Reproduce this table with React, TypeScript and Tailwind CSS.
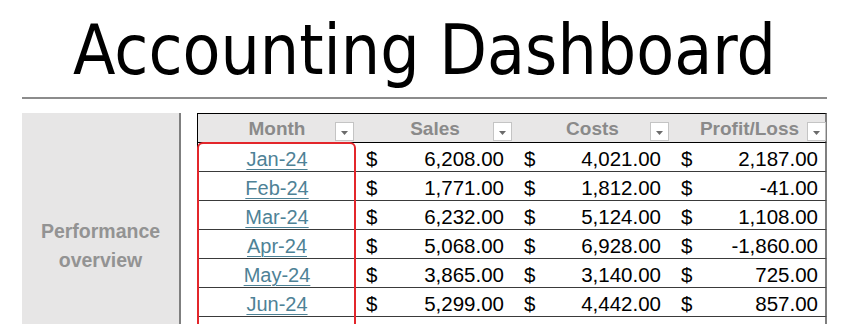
import React from "react";

type Row = { m: string; s: string; c: string; p: string };

const rows: Row[] = [
  { m: "Jan-24", s: "6,208.00", c: "4,021.00", p: "2,187.00" },
  { m: "Feb-24", s: "1,771.00", c: "1,812.00", p: "-41.00" },
  { m: "Mar-24", s: "6,232.00", c: "5,124.00", p: "1,108.00" },
  { m: "Apr-24", s: "5,068.00", c: "6,928.00", p: "-1,860.00" },
  { m: "May-24", s: "3,865.00", c: "3,140.00", p: "725.00" },
  { m: "Jun-24", s: "5,299.00", c: "4,442.00", p: "857.00" },
  { m: "Jul-24", s: "4,876.00", c: "3,912.00", p: "964.00" },
  { m: "Aug-24", s: "5,540.00", c: "4,105.00", p: "1,435.00" },
];

function FilterButton() {
  return (
    <div className="absolute right-[2px] bottom-[1px] flex h-[19px] w-[19px] items-center justify-center border border-[#c4c4c4] bg-white">
      <svg width="7" height="4" viewBox="0 0 7 4" className="mt-[3px]">
        <path d="M0 0 L7 0 L3.5 4 Z" fill="#6b6b6b" />
      </svg>
    </div>
  );
}

function HeaderCell({ label }: { label: string }) {
  return (
    <div className="relative flex h-full justify-center pt-[4px] text-[19px] leading-[21px] font-bold text-[#8a8a8a]">
      <span>{label}</span>
      <FilterButton />
    </div>
  );
}

function MoneyCell({ v }: { v: string }) {
  return (
    <div className="flex justify-between px-[10px] pt-[5px] leading-[22px]">
      <span>$</span>
      <span>{v}</span>
    </div>
  );
}

export default function App() {
  return (
    <div className="h-[324px] w-[841px] overflow-hidden bg-white pl-[22px] pr-[14px] font-['Liberation_Sans',Arial,sans-serif] text-black">
      <h1 className="pt-[14px] text-center whitespace-nowrap font-['DejaVu_Sans',sans-serif] font-stretch-condensed text-[69px] leading-[72px] font-normal">
        Accounting Dashboard
      </h1>
      <div className="mt-[11px] h-[2px] bg-[#8c8c8c]" />
      <div className="mt-[14px] flex gap-[16px]">
        <div className="flex h-[300px] w-[159px] shrink-0 flex-col items-center border-r-2 border-[#7f7f7f] bg-[#e7e6e6] pt-[104px] text-center text-[19.5px] leading-[29px] font-bold text-[#939393]">
          <span>Performance</span>
          <span>overview</span>
        </div>
        <div className="relative w-[630px] shrink-0">
          <div className="grid h-[30px] grid-cols-[158px_158px_157px_157px] border-t border-b border-l border-black border-r-2 border-r-[#7f7f7f] bg-[#e8e7e7]">
            <HeaderCell label="Month" />
            <HeaderCell label="Sales" />
            <HeaderCell label="Costs" />
            <HeaderCell label="Profit/Loss" />
          </div>
          {rows.map((r) => (
            <div
              key={r.m}
              className="grid h-[29px] grid-cols-[158px_158px_157px_157px] border-b border-l border-b-[#3a3a3a] border-l-black border-r-2 border-r-[#7f7f7f] text-[20.5px]"
            >
              <div className="flex justify-center pt-[5px] leading-[22px]">
                <span className="text-[20px] text-[#4e8296] underline decoration-1 underline-offset-[3px]">{r.m}</span>
              </div>
              <MoneyCell v={r.s} />
              <MoneyCell v={r.c} />
              <MoneyCell v={r.p} />
            </div>
          ))}
          <div className="pointer-events-none absolute top-[29px] left-0 h-[260px] w-[159px] rounded-[6px] border-2 border-[#e3262b]" />
        </div>
      </div>
    </div>
  );
}
